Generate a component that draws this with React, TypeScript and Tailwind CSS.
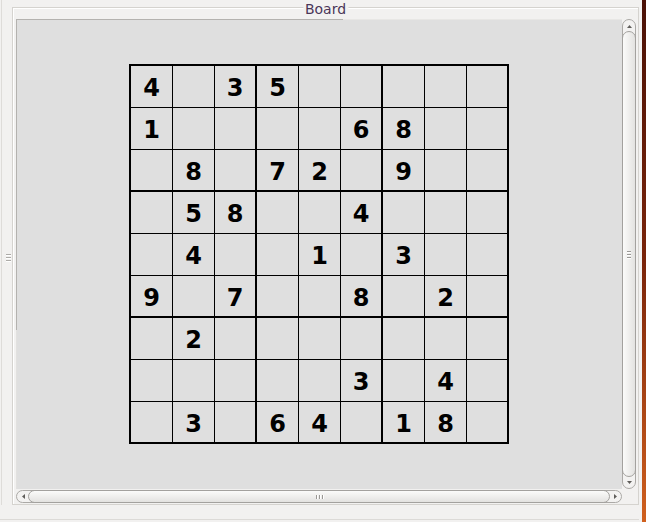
const puzzle = [
  "4.35.....",
  "1....68..",
  ".8.72.9..",
  ".58..4...",
  ".4..1.3..",
  "9.7..8.2.",
  ".2.......",
  ".....3.4.",
  ".3.64.18.",
];

function Arrow({ dir }: { dir: "up" | "down" | "left" | "right" }) {
  const pts = {
    up: "0,3 2.5,0 5,3",
    down: "0,0 2.5,3 5,0",
    left: "3,0 0,2.5 3,5",
    right: "0,0 3,2.5 0,5",
  }[dir];
  const vertical = dir === "up" || dir === "down";
  return (
    <svg width={vertical ? 5 : 3} height={vertical ? 3 : 5} viewBox={vertical ? "0 0 5 3" : "0 0 3 5"}>
      <polygon points={pts} fill="#5f5d5a" />
    </svg>
  );
}

function VScrollbar() {
  return (
    <div className="flex h-full w-[14px] flex-col rounded-[7px] border border-[#aba9a6] bg-[#f3f2f1]">
      <div className="flex h-[11px] shrink-0 items-center justify-center pt-px">
        <Arrow dir="up" />
      </div>
      <div className="-mx-px flex flex-1 flex-col items-center justify-center gap-[2px] rounded-[7px] border border-[#a3a19e] bg-[linear-gradient(to_right,#fbfbfa,#e3e2e0)]">
        <div className="h-px w-[4px] bg-[#9a9895] shadow-[0_1px_0_#fff]" />
        <div className="h-px w-[4px] bg-[#9a9895] shadow-[0_1px_0_#fff]" />
        <div className="h-px w-[4px] bg-[#9a9895] shadow-[0_1px_0_#fff]" />
      </div>
      <div className="flex h-[11px] shrink-0 items-center justify-center pb-px">
        <Arrow dir="down" />
      </div>
    </div>
  );
}

function HScrollbar() {
  return (
    <div className="flex h-[13px] w-full flex-row rounded-[7px] border border-[#aba9a6] bg-[#f3f2f1]">
      <div className="flex w-[11px] shrink-0 items-center justify-center pl-px">
        <Arrow dir="left" />
      </div>
      <div className="-my-px flex flex-1 flex-row items-center justify-center gap-[2px] rounded-[7px] border border-[#a3a19e] bg-[linear-gradient(to_bottom,#fbfbfa,#e3e2e0)]">
        <div className="h-[4px] w-px bg-[#9a9895] shadow-[1px_0_0_#fff]" />
        <div className="h-[4px] w-px bg-[#9a9895] shadow-[1px_0_0_#fff]" />
        <div className="h-[4px] w-px bg-[#9a9895] shadow-[1px_0_0_#fff]" />
      </div>
      <div className="flex w-[11px] shrink-0 items-center justify-center pr-px">
        <Arrow dir="right" />
      </div>
    </div>
  );
}

function Board() {
  return (
    <div className="grid grid-cols-[repeat(9,42px)] border-l-2 border-t-2 border-black">
      {puzzle.map((row, r) =>
        row.split("").map((ch, c) => {
          const right = c === 2 || c === 5 || c === 8 ? "border-r-2" : "border-r";
          const bottom = r === 2 || r === 5 || r === 8 ? "border-b-2" : "border-b";
          return (
            <div
              key={`${r}-${c}`}
              className={`flex h-[42px] w-[42px] items-center justify-center border-black pt-[3px] font-['DejaVu_Sans',sans-serif] text-[24px] font-bold leading-none text-black ${right} ${bottom}`}
            >
              {ch === "." ? "" : ch}
            </div>
          );
        })
      )}
    </div>
  );
}

export default function App() {
  return (
    <div className="flex h-[522px] w-[646px] flex-row overflow-hidden bg-[#f2f1f0] font-['DejaVu_Sans',sans-serif]">
      <div className="flex w-[639px] flex-col">
        <div className="flex h-[505px] flex-row">
          {/* pane handle */}
          <div className="ml-px flex w-[11px] items-center border-l border-[#dedcd9]">
            <div className="ml-[4px] mt-[10px] flex flex-col gap-[2px]">
              <div className="h-px w-[5px] bg-[#adaba8] shadow-[0_1px_0_#fff]" />
              <div className="h-px w-[5px] bg-[#adaba8] shadow-[0_1px_0_#fff]" />
              <div className="h-px w-[5px] bg-[#adaba8] shadow-[0_1px_0_#fff]" />
            </div>
          </div>

          {/* frame */}
          <div className="relative mt-[7px] h-[498px] w-[627px] border border-[#d5d3cf] pb-px pl-[3px] pr-px pt-[11px] shadow-[inset_1px_1px_0_#fff]">
            <div className="absolute -top-[7px] left-1/2 -translate-x-1/2 bg-[#f2f1f0] px-[2px] text-[14px] leading-[16px] text-[#4a3658]">
              Board
            </div>

            <div className="grid grid-cols-[606px_15px] grid-rows-[470px_14px]">
              <div className="flex flex-col">
                <div className="h-px bg-[linear-gradient(to_right,#b4b2af_327px,#e8e7e5_327px)]" />
                <div className="flex flex-1 flex-row">
                  <div className="w-px bg-[linear-gradient(to_bottom,#b4b2af_310px,#e2e1df_310px)]" />
                  <div className="flex flex-1 items-center justify-center bg-[#dfdfdf] pb-px pr-px">
                    <Board />
                  </div>
                </div>
              </div>
              <div className="flex pr-px">
                <VScrollbar />
              </div>
              <div className="flex items-end">
                <HScrollbar />
              </div>
              <div />
            </div>
          </div>
        </div>
        <div className="flex h-[17px] flex-col justify-end pb-[2px]">
          <div className="h-px bg-[#dcdad7]" />
        </div>
      </div>
      <div className="w-[3px]" />
      <div className="w-[4px] bg-[linear-gradient(to_bottom,#4a1106,#7a240a_50%,#d0601e)]" />
    </div>
  );
}
